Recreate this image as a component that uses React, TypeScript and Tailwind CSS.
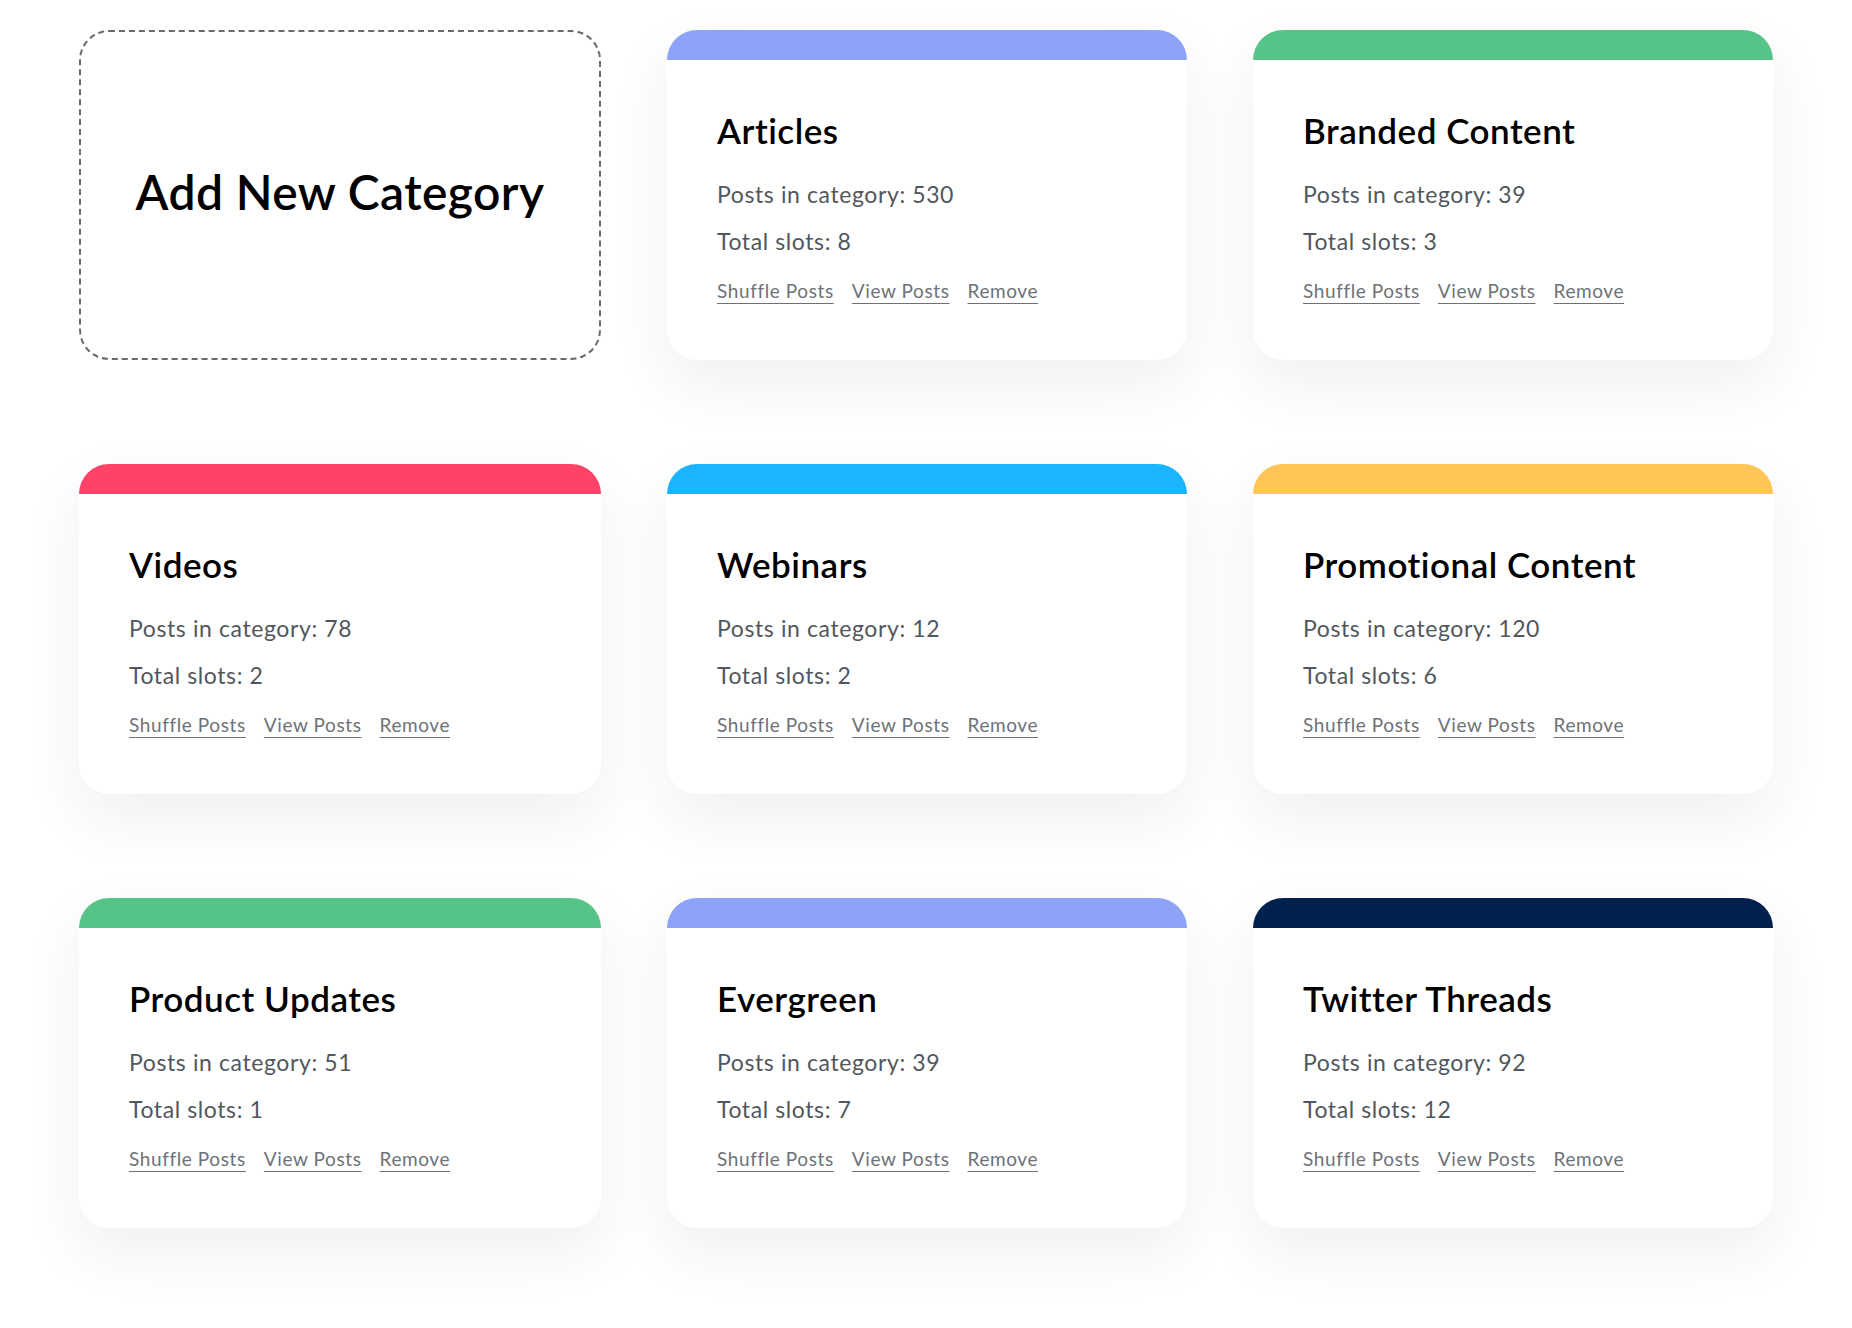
import React from "react";

type Category = {
  name: string;
  posts: number;
  slots: number;
  color: string;
};

const categories: Category[] = [
  { name: "Articles", posts: 530, slots: 8, color: "bg-[#8ca3f8]" },
  { name: "Branded Content", posts: 39, slots: 3, color: "bg-[#56c489]" },
  { name: "Videos", posts: 78, slots: 2, color: "bg-[#ff4267]" },
  { name: "Webinars", posts: 12, slots: 2, color: "bg-[#1bb5ff]" },
  { name: "Promotional Content", posts: 120, slots: 6, color: "bg-[#ffc555]" },
  { name: "Product Updates", posts: 51, slots: 1, color: "bg-[#56c489]" },
  { name: "Evergreen", posts: 39, slots: 7, color: "bg-[#8ca3f8]" },
  { name: "Twitter Threads", posts: 92, slots: 12, color: "bg-[#00214d]" },
];

function CategoryCard({ category }: { category: Category }) {
  return (
    <div className="flex h-[330px] flex-col overflow-hidden rounded-[30px] bg-white shadow-[0_24px_60px_rgba(30,41,59,0.07)]">
      <div className={`h-[30px] w-full shrink-0 ${category.color}`} />
      <div className="flex flex-col pl-[50px] pt-[42px]">
        <h2 className="text-[35px] font-semibold leading-[56px] tracking-[0.5px] text-black">
          {category.name}
        </h2>
        <p className="mt-[22px] text-[23px] leading-[28px] tracking-[0.6px] text-[#52575d]">
          Posts in category: {category.posts}
        </p>
        <p className="mt-[19px] text-[23px] leading-[28px] tracking-[0.6px] text-[#52575d]">
          Total slots: {category.slots}
        </p>
        <div className="mt-[24px] flex gap-[18px] text-[19px] leading-[24px] tracking-[0.6px] text-[#6e7277]">
          {["Shuffle Posts", "View Posts", "Remove"].map((label) => (
            <a
              key={label}
              href="#"
              className="underline decoration-[#6e7277] decoration-1 underline-offset-[5px]"
            >
              {label}
            </a>
          ))}
        </div>
      </div>
    </div>
  );
}

export default function App() {
  return (
    <div
      className="min-h-screen bg-white pl-[79px] pt-[30px]"
      style={{ fontFamily: "Lato, 'Noto Sans', sans-serif" }}
    >
      <div className="grid w-[1693px] grid-cols-[522px_520px_520px] gap-x-[66px] gap-y-[104px]">
        <button className="flex h-[330px] items-center justify-center rounded-[30px] border-2 border-dashed border-[#6a6a6a] bg-white pb-[6px]">
          <span className="text-[48px] font-semibold tracking-[0.4px] text-black">
            Add New Category
          </span>
        </button>
        {categories.map((c) => (
          <CategoryCard key={c.name} category={c} />
        ))}
      </div>
    </div>
  );
}
